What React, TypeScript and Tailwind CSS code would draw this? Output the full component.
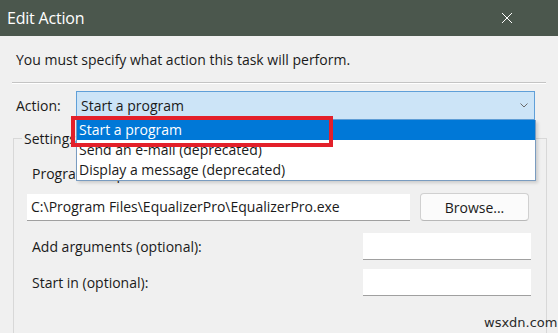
import React from 'react';

const font = { fontFamily: '"Open Sans", "Noto Sans", Arial, sans-serif' };

function TextBox({ className, value }: { className: string; value?: string }) {
    return (
        <div className={`h-[27px] bg-white border-b border-[#a0a0a0] flex items-center px-[4px] text-[14px] text-[#1a1a1a] ${className}`}>
            {value}
        </div>
    );
}

export default function App() {
    const options = ['Start a program', 'Send an e-mail (deprecated)', 'Display a message (deprecated)'];

    return (
        <div
            className="relative w-[558px] h-[333px] overflow-hidden bg-[#f0f0f0] text-[#1a1a1a] flex flex-col"
            style={font}
        >
            {/* Title bar */}
            <div className="h-[36px] shrink-0 bg-[#4b574d] flex items-center justify-between pl-[7px] pr-[45px]">
                <span className="text-white text-[16px] tracking-[-0.2px]">Edit Action</span>
                <svg width="12" height="12" viewBox="0 0 12 12" className="text-white">
                    <path d="M1 1 L11 11 M11 1 L1 11" stroke="currentColor" strokeWidth="1" fill="none" />
                </svg>
            </div>

            <div className="flex flex-col pl-[12px] pr-[12px]">
                <p className="pl-[4px] pt-[14px] text-[14px] leading-[20px]">
                    You must specify what action this task will perform.
                </p>

                <div className="mt-[12px] h-[2px] border-t border-[#c4c4c4] border-b border-b-white" />

                {/* Action row */}
                <div className="mt-[7px] flex items-center">
                    <span className="pl-[4px] w-[64px] text-[14px]">Action:</span>
                    <div className="flex-1 h-[29px] mr-[11px] bg-[#cce4f7] border border-[#5f9fd8] flex items-center justify-between pl-[4px] pr-[6px] text-[14px]">
                        <span>Start a program</span>
                        <svg width="8" height="5" viewBox="0 0 8 5">
                            <path d="M0.5 0.5 L4 4 L7.5 0.5" stroke="#6a6a6a" strokeWidth="1" fill="none" />
                        </svg>
                    </div>
                </div>

                {/* Settings group */}
                <div className="mt-[18px] ml-[1px] mr-[-1px] h-[220px] border border-[#d8d8d8] relative">
                    <span className="absolute -top-[11px] left-[8px] bg-[#f0f0f0] px-[2px] text-[14px]">Settings:</span>
                    <div className="flex flex-col pl-[13px] pr-[15px] pt-[25px]">
                        <span className="pl-[5px] text-[14px] leading-[20px]">Program/script:</span>
                        <div className="mt-[9px] flex items-center gap-[10px]">
                            <TextBox className="w-[383px]" value="C:\Program Files\EqualizerPro\EqualizerPro.exe" />
                            <button className="w-[109px] h-[28px] rounded-[4px] bg-[#fbfbfb] border border-[#d0d0d0] border-b-[#b8b8b8] text-[14px] text-[#1a1a1a]">
                                Browse...
                            </button>
                        </div>
                        <div className="mt-[12px] flex items-center justify-between">
                            <span className="pl-[5px] text-[14px]">Add arguments (optional):</span>
                            <TextBox className="w-[168px]" />
                        </div>
                        <div className="mt-[9px] flex items-center justify-between">
                            <span className="pl-[5px] text-[14px]">Start in (optional):</span>
                            <TextBox className="w-[168px]" />
                        </div>
                    </div>
                </div>
            </div>

            {/* Open dropdown list */}
            <div className="absolute left-[76px] top-[120px] w-[460px] bg-white border border-[#7a9cc0] border-t-0 shadow-[2px_2px_3px_rgba(0,0,0,0.15)] flex flex-col text-[14px]">
                {options.map((o, i) => (
                    <div
                        key={o}
                        className={`h-[20px] leading-[20px] pl-[2px] ${i === 0 ? 'bg-[#0078d7] text-white' : 'text-[#1a1a1a]'}`}
                    >
                        {o}
                    </div>
                ))}
            </div>

            {/* Red highlight */}
            <div className="absolute left-[71px] top-[116px] w-[262px] h-[31px] border-[4px] border-[#e3202a]" />

            <span className="absolute left-[484px] top-[313px] text-[13px] text-[#2a2a2a]" style={{ fontFamily: '"DejaVu Sans", sans-serif' }}>
                wsxdn.com
            </span>
        </div>
    );
}
